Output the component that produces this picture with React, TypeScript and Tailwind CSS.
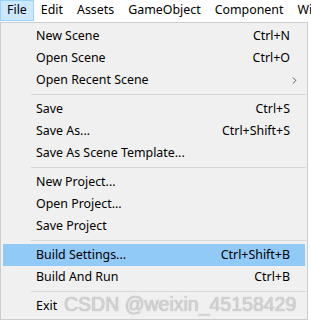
import { ChevronRight } from 'lucide-react'

type Item =
  | { sep: true }
  | { label: string; shortcut?: string; sub?: boolean; active?: boolean }

const bar = ['File', 'Edit', 'Assets', 'GameObject', 'Component', 'Window']

const items: Item[] = [
  { label: 'New Scene', shortcut: 'Ctrl+N' },
  { label: 'Open Scene', shortcut: 'Ctrl+O' },
  { label: 'Open Recent Scene', sub: true },
  { sep: true },
  { label: 'Save', shortcut: 'Ctrl+S' },
  { label: 'Save As...', shortcut: 'Ctrl+Shift+S' },
  { label: 'Save As Scene Template...' },
  { sep: true },
  { label: 'New Project...' },
  { label: 'Open Project...' },
  { label: 'Save Project' },
  { sep: true },
  { label: 'Build Settings...', shortcut: 'Ctrl+Shift+B', active: true },
  { label: 'Build And Run', shortcut: 'Ctrl+B' },
  { sep: true },
  { label: 'Exit' },
]

export default function App() {
  return (
    <div className="relative w-[311px] h-[320px] overflow-hidden bg-white text-[12.4px] text-black font-['Noto_Sans',sans-serif]">
      {/* menu bar */}
      <div className="flex h-[22px] whitespace-nowrap">
        {bar.map((b, i) => (
          <div
            key={b}
            className={
              i === 0
                ? 'flex h-[21px] shrink-0 items-center border border-[#99d1ff] bg-[#cce8ff] px-[6px]'
                : 'flex h-[21px] shrink-0 items-center px-[7px]'
            }
          >
            {b}
          </div>
        ))}
      </div>

      {/* dropdown */}
      <div className="w-[308px] border border-[#cccccc] bg-[#f0f0f0] pt-[2px] pb-[2px]">
        {items.map((it, i) =>
          'sep' in it ? (
            <div key={i} className="flex h-[7px] items-center pl-[30px] pr-[1px]">
              <div className="h-px flex-1 bg-[#d7d7d7]" />
            </div>
          ) : (
            <div
              key={i}
              className={
                'mx-[2px] flex h-[22px] items-center pl-[33px] pr-[15px] ' +
                (it.active ? 'bg-[#91c9f7]' : '')
              }
            >
              <span className="flex-1">{it.label}</span>
              {it.shortcut && <span>{it.shortcut}</span>}
              {it.sub && <ChevronRight className="-mr-[10px] h-[11px] w-[11px] text-[#222]" strokeWidth={1.6} />}
            </div>
          )
        )}
      </div>

      {/* watermark */}
      <div className="pointer-events-none absolute left-[64px] top-[292px] text-[19.5px] leading-[24px] text-[#d2d2d2] font-['Liberation_Sans',sans-serif] [text-shadow:0_0_1px_#a8a8a8]">
        CSDN @weixin_45158429
      </div>
    </div>
  )
}
